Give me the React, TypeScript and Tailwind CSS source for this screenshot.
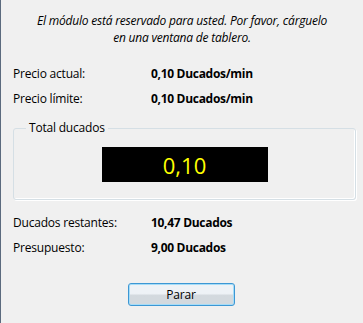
export default function App() {
  const font = { fontFamily: '"Open Sans", "Noto Sans", sans-serif' };

  const rows1 = [
    { label: 'Precio actual:', value: '0,10 Ducados/min' },
    { label: 'Precio límite:', value: '0,10 Ducados/min' },
  ];
  const rows2 = [
    { label: 'Ducados restantes:', value: '10,47 Ducados' },
    { label: 'Presupuesto:', value: '9,00 Ducados' },
  ];

  return (
    <div
      className="w-[363px] h-[323px] bg-[#f0f0f0] border-l border-[#5b6a7e] text-black text-[12px] leading-[16px] flex flex-col"
      style={font}
    >
      {/* Notice */}
      <p className="mt-[12px] text-center italic tracking-[-0.2px] leading-[17px]">
        El módulo está reservado para usted. Por favor, cárguelo
        <br />
        en una ventana de tablero.
      </p>

      {/* Prices */}
      <div className="mt-[20px] flex flex-col gap-[9px] pl-[12px]">
        {rows1.map((r) => (
          <div key={r.label} className="flex">
            <span className="w-[138px] tracking-[-0.2px]">{r.label}</span>
            <span className="font-bold tracking-[-0.3px]">{r.value}</span>
          </div>
        ))}
      </div>

      {/* Total group */}
      <fieldset className="mt-[14px] ml-[12px] mr-[7px] h-[79px] rounded-[3px] border border-[#d5dfe5] shadow-[inset_-1px_-1px_0_#ffffff,1px_1px_0_#ffffff] px-[6px] flex justify-center">
        <legend className="ml-[6px] px-[3px] leading-[14px] tracking-[-0.2px]">Total ducados</legend>
        <div className="mt-[12px] w-[166px] h-[35px] bg-black text-[#ffff00] text-[22px] flex items-center justify-center self-start">
          0,10
        </div>
      </fieldset>

      {/* Balance */}
      <div className="mt-[15px] flex flex-col gap-[9px] pl-[12px]">
        {rows2.map((r) => (
          <div key={r.label} className="flex">
            <span className="w-[138px] tracking-[-0.2px]">{r.label}</span>
            <span className="font-bold tracking-[-0.3px]">{r.value}</span>
          </div>
        ))}
      </div>

      {/* Action */}
      <div className="mt-[27px] flex justify-center pr-[2px]">
        <button
          type="button"
          className="w-[107px] h-[23px] rounded-[3px] border border-[#3c97d4] shadow-[inset_0_0_0_1px_#a6dcf7] bg-gradient-to-b from-[#eef2f6] from-45% to-[#d3d9de] to-55% text-[12px] tracking-[-0.2px]"
        >
          Parar
        </button>
      </div>
    </div>
  );
}
